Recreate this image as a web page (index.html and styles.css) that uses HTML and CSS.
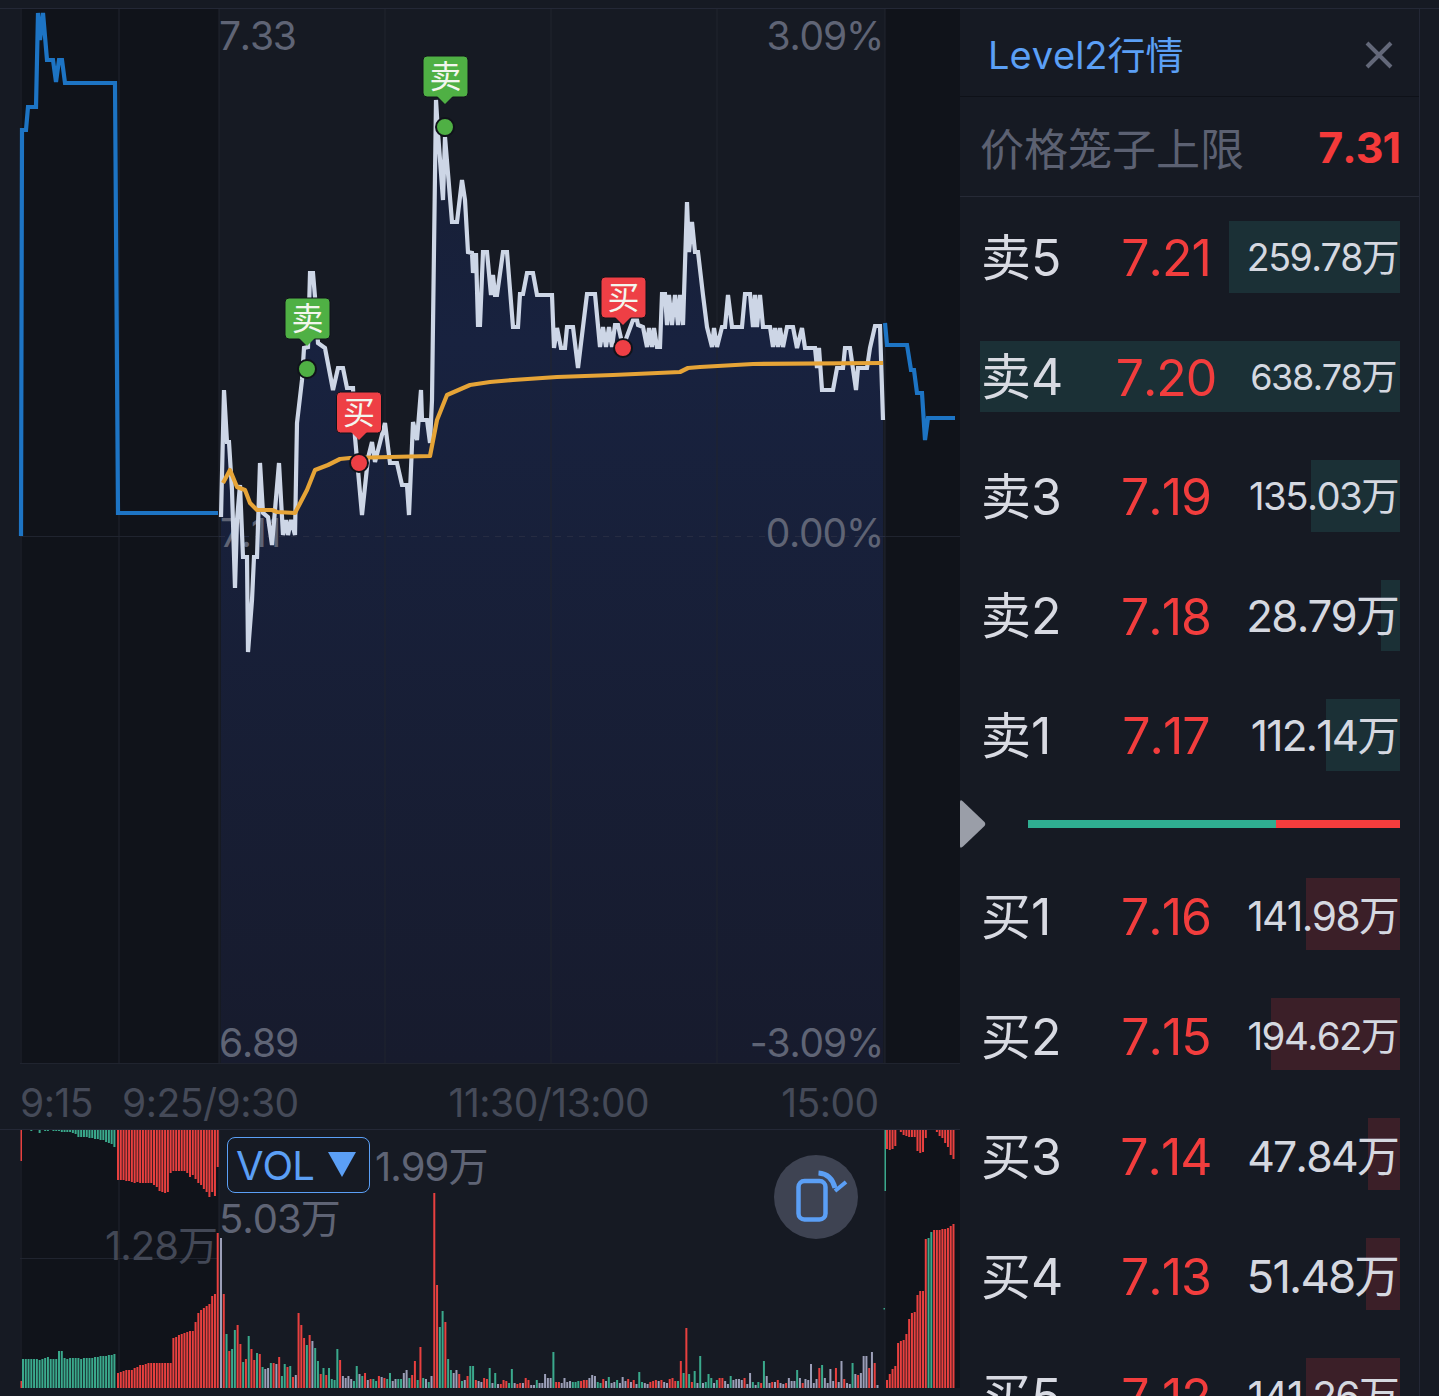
FILE: index.html
```html
<!DOCTYPE html>
<html lang="zh-CN">

<head>
  <meta charset="UTF-8">
  <meta name="viewport" content="width=device-width, initial-scale=1.0">
  <title>Level2行情</title>
  <link rel="stylesheet" href="styles.css">
</head>

<body>
  <div class="top-strip"></div>
  <div class="layout">
    <section class="chart-col">
      <svg class="price-chart" width="960" height="1055" viewBox="0 9 960 1055">
        <defs>
          <linearGradient id="area-fill" x1="0" y1="0" x2="0" y2="1">
            <stop offset="0" stop-color="#18224180"/>
            <stop offset="0.25" stop-color="#18223f"/>
            <stop offset="1" stop-color="#171b2d"/>
          </linearGradient>
        </defs>
        <!-- pre and post market shading -->
        <rect x="20" y="9" width="199" height="1055" fill="#10131a"/>
        <rect x="885" y="9" width="75" height="1055" fill="#10131a"/>

        <!-- area under the price line -->
        <polygon fill="url(#area-fill)" points="221,1063 221,517 224,390 227,442 229,442 232,490 235,588 237,520 240,485 243,557 247,557 248,652 252,600 254,557 257,557 260,463 263,513 268,517 272,545 279,463 283,535 286,520 288,535 291,520 295,535 297,423 302,380 304,348 308,347 310,273 313,273 315,297 318,343 325,348 333,390 338,368 343,368 347,388 353,388 355,437 362,515 368,458 372,442 375,462 385,423 390,463 397,463 402,485 407,485 409,515 413,422 417,440 421,390 422,420 427,420 430,443 432,400 436,100 438,133 443,200 445,137 452,222 457,222 462,180 465,200 468,252 472,253 473,273 476,253 478,325 480,325 483,252 487,252 491,295 493,275 495,295 497,295 503,252 507,252 513,327 518,327 520,294 523,294 527,273 533,273 537,295 552,295 554,348 557,328 561,348 565,348 567,327 573,327 578,368 587,294 595,294 600,347 603,327 606,347 609,327 612,347 615,325 618,325 623,347 633,320 637,320 638,325 643,327 647,347 649,328 652,347 654,328 657,347 660,347 662,294 665,294 667,325 669,295 672,325 675,295 678,325 680,295 683,325 684,295 687,202 689,252 692,222 695,252 698,252 703,295 707,327 712,347 714,328 717,347 722,327 725,327 728,295 732,327 742,327 745,294 750,294 753,327 755,295 757,327 760,295 763,327 770,327 773,347 775,328 778,347 780,328 783,347 787,327 793,327 797,348 802,328 805,348 815,348 817,368 819,348 822,390 833,390 837,368 843,368 845,348 850,348 856,390 858,368 867,368 870,348 875,326 880,326 883,420 883,1063"/>

        <!-- grid -->
        <g class="grid-line">
          <line x1="21" y1="9" x2="21" y2="1063"/>
          <line x1="119" y1="9" x2="119" y2="1063"/>
          <line x1="219" y1="9" x2="219" y2="1063"/>
          <line x1="385" y1="9" x2="385" y2="1063"/>
          <line x1="551" y1="9" x2="551" y2="1063"/>
          <line x1="717" y1="9" x2="717" y2="1063"/>
          <line x1="885" y1="9" x2="885" y2="1063"/>
          <line x1="20" y1="1063.5" x2="960" y2="1063.5"/>
          <line x1="20" y1="536.5" x2="219" y2="536.5"/>
          <line x1="885" y1="536.5" x2="960" y2="536.5"/>
          <line class="dash-line" x1="219" y1="536.5" x2="885" y2="536.5"/>
        </g>

        <text class="axis-text" x="219" y="50">7.33</text>
        <text class="axis-text" x="220" y="547">7.11</text>
        <text class="axis-text" x="219" y="1057">6.89</text>
        <text class="axis-text axis-end" x="883" y="50">3.09%</text>
        <text class="axis-text axis-end" x="883" y="547">0.00%</text>
        <text class="axis-text axis-end" x="883" y="1057">-3.09%</text>

        <!-- auction lines -->
        <polyline class="line-auction" points="21,536 22,130 26,130 28,107 36,107 38,13 40,40 43,13 47,60 53,60 56,82 59,60 62,60 65,83 115,83 118,513 218,513"/>
        <polyline class="line-auction" points="885,323 887,345 907,345 911,370 914,370 917,393 922,393 925,440 928,418 955,418"/>

        <!-- price line -->
        <polyline class="line-price" points="221,517 224,390 227,442 229,442 232,490 235,588 237,520 240,485 243,557 247,557 248,652 252,600 254,557 257,557 260,463 263,513 268,517 272,545 279,463 283,535 286,520 288,535 291,520 295,535 297,423 302,380 304,348 308,347 310,273 313,273 315,297 318,343 325,348 333,390 338,368 343,368 347,388 353,388 355,437 362,515 368,458 372,442 375,462 385,423 390,463 397,463 402,485 407,485 409,515 413,422 417,440 421,390 422,420 427,420 430,443 432,400 436,100 438,133 443,200 445,137 452,222 457,222 462,180 465,200 468,252 472,253 473,273 476,253 478,325 480,325 483,252 487,252 491,295 493,275 495,295 497,295 503,252 507,252 513,327 518,327 520,294 523,294 527,273 533,273 537,295 552,295 554,348 557,328 561,348 565,348 567,327 573,327 578,368 587,294 595,294 600,347 603,327 606,347 609,327 612,347 615,325 618,325 623,347 633,320 637,320 638,325 643,327 647,347 649,328 652,347 654,328 657,347 660,347 662,294 665,294 667,325 669,295 672,325 675,295 678,325 680,295 683,325 684,295 687,202 689,252 692,222 695,252 698,252 703,295 707,327 712,347 714,328 717,347 722,327 725,327 728,295 732,327 742,327 745,294 750,294 753,327 755,295 757,327 760,295 763,327 770,327 773,347 775,328 778,347 780,328 783,347 787,327 793,327 797,348 802,328 805,348 815,348 817,368 819,348 822,390 833,390 837,368 843,368 845,348 850,348 856,390 858,368 867,368 870,348 875,326 880,326 883,420"/>

        <!-- average line -->
        <polyline class="line-average" points="223,483 230,470 237,487 245,490 250,503 257,510 272,510 277,512 295,513 307,490 315,470 328,465 340,459 350,458 430,456 437,420 447,395 470,385 490,382 513,380 557,377 613,375 680,372 688,368 700,367 753,364 883,363"/>

        <!-- trade markers -->
        <g class="marker marker-sell">
          <rect x="285" y="298" width="45" height="41" rx="4"/>
          <path d="M299 338 L307 346 L315 338 Z"/>
          <text x="307.5" y="330">卖</text>
          <circle cx="307" cy="369" r="9"/>
        </g>
        <g class="marker marker-sell">
          <rect x="423" y="56" width="45" height="41" rx="4"/>
          <path d="M437 96 L445 104 L453 96 Z"/>
          <text x="445.5" y="88">卖</text>
          <circle cx="445" cy="127" r="9"/>
        </g>
        <g class="marker marker-buy">
          <rect x="336.5" y="392" width="45" height="41" rx="4"/>
          <path d="M351 432 L359 440 L367 432 Z"/>
          <text x="359" y="424">买</text>
          <circle cx="359" cy="463" r="9"/>
        </g>
        <g class="marker marker-buy">
          <rect x="601" y="277" width="45" height="41" rx="4"/>
          <path d="M615 317 L623 325 L631 317 Z"/>
          <text x="623.5" y="309">买</text>
          <circle cx="623" cy="348" r="9"/>
        </g>
      </svg>

      <div class="time-axis">
        <span class="time-a">9:15</span>
        <span class="time-b">9:25/9:30</span>
        <span class="time-c">11:30/13:00</span>
        <span class="time-d">15:00</span>
      </div>

      <div class="vol-panel">
        <svg id="vol-chart" class="vol-chart" width="960" height="267" viewBox="0 1129 960 267"></svg>
        <div class="vol-tag">
          <span>VOL</span>
          <svg width="28" height="26" viewBox="0 0 28 26"><path d="M0 0 H28 L14 25 Z" fill="#5b9ff5"/></svg>
        </div>
        <span class="vol-text vol-text-cur">1.99万</span>
        <span class="vol-text vol-text-max">5.03万</span>
        <span class="vol-text vol-text-pre">1.28万</span>
        <button class="rotate-btn" type="button" aria-label="rotate">
          <svg width="84" height="84" viewBox="0 0 84 84" fill="none" stroke="#5b9ff5">
            <rect x="24.5" y="26" width="27" height="38.5" rx="6" stroke-width="4.5"/>
            <path d="M44.5 18 C52 18.5 58.5 23 61 33" stroke-width="5"/>
            <path d="M61 36 L72 27" stroke-width="4"/>
          </svg>
        </button>
      </div>
    </section>

    <aside class="panel">
      <div class="panel-head">
        <span class="panel-title">Level2行情</span>
        <svg class="panel-close" width="28" height="28" viewBox="0 0 28 28" stroke="#636879" stroke-width="4"><path d="M2 2 L26 26 M26 2 L2 26"/></svg>
      </div>
      <div class="cage-row">
        <span class="cage-label">价格笼子上限</span>
        <span class="cage-value">7.31</span>
      </div>

      <div class="quote-row sell-row">
        <span class="depth depth-sell" style="width: 171px"></span>
        <span class="q-label">卖5</span><span class="q-price">7.21</span><span class="q-vol" data-fit="151">259.78万</span>
      </div>
      <div class="quote-row sell-row">
        <span class="depth depth-sell" style="width: 420px"></span>
        <span class="q-label">卖4</span><span class="q-price">7.20</span><span class="q-vol q-vol-full" data-fit="146">638.78万</span>
      </div>
      <div class="quote-row sell-row">
        <span class="depth depth-sell" style="width: 89px"></span>
        <span class="q-label">卖3</span><span class="q-price">7.19</span><span class="q-vol" data-fit="149">135.03万</span>
      </div>
      <div class="quote-row sell-row">
        <span class="depth depth-sell" style="width: 19px"></span>
        <span class="q-label">卖2</span><span class="q-price">7.18</span><span class="q-vol" data-fit="152">28.79万</span>
      </div>
      <div class="quote-row sell-row">
        <span class="depth depth-sell" style="width: 74px"></span>
        <span class="q-label">卖1</span><span class="q-price">7.17</span><span class="q-vol" data-fit="147">112.14万</span>
      </div>

      <div class="split-row">
        <svg class="split-arrow" width="26" height="48" viewBox="0 0 26 48"><path d="M0 2 Q0 -1 3 1.5 L24.5 22 Q26 24 24.5 26 L3 46.5 Q0 49 0 46 Z" fill="#9a9ea8"/></svg>
        <div class="split-bar">
          <span class="split-green"></span>
          <span class="split-red"></span>
        </div>
      </div>

      <div class="quote-row">
        <span class="depth depth-buy" style="width: 94px"></span>
        <span class="q-label">买1</span><span class="q-price">7.16</span><span class="q-vol" data-fit="151">141.98万</span>
      </div>
      <div class="quote-row">
        <span class="depth depth-buy" style="width: 129px"></span>
        <span class="q-label">买2</span><span class="q-price">7.15</span><span class="q-vol" data-fit="151">194.62万</span>
      </div>
      <div class="quote-row">
        <span class="depth depth-buy" style="width: 32px"></span>
        <span class="q-label">买3</span><span class="q-price">7.14</span><span class="q-vol" data-fit="151">47.84万</span>
      </div>
      <div class="quote-row">
        <span class="depth depth-buy" style="width: 34px"></span>
        <span class="q-label">买4</span><span class="q-price">7.13</span><span class="q-vol" data-fit="151">51.48万</span>
      </div>
      <div class="quote-row">
        <span class="depth depth-buy" style="width: 94px"></span>
        <span class="q-label">买5</span><span class="q-price">7.12</span><span class="q-vol" data-fit="151">141.26万</span>
      </div>
    </aside>
  </div>
  <script src="chart.js"></script>
</body>

</html>
```

FILE: styles.css
```css
html,
body {
  margin: 0;
  padding: 0;
  height: 1396px;
  overflow: hidden;
  background-color: #161a23;
  font-family: Inter, "Noto Sans CJK SC", sans-serif;
  font-kerning: none;
}

.top-strip {
  height: 8px;
  border-bottom: 1px solid #242836;
}

.layout {
  display: flex;
  align-items: flex-start;
}

/* Left column: price chart, time axis, volume */
.chart-col {
  width: 960px;
  flex-shrink: 0;
}

.price-chart {
  display: block;
  overflow: visible;
}

.grid-line line {
  stroke: #20242f;
  stroke-width: 1;
}

.grid-line .dash-line {
  stroke: #262c42;
  stroke-dasharray: 6 6;
}

.axis-text {
  font-size: 39px;
  letter-spacing: -1.2px;
  fill: #5f6475;
}

.axis-end {
  text-anchor: end;
}

.line-price,
.line-average,
.line-auction {
  fill: none;
  stroke-width: 4.2;
  stroke-linejoin: miter;
}

.line-price {
  stroke: #cdd6e6;
}

.line-average {
  stroke: #e6a437;
  stroke-linejoin: round;
}

.line-auction {
  stroke: #1d74c4;
}

.marker text {
  font-size: 32px;
  text-anchor: middle;
  fill: #f3f6ee;
}

.marker circle {
  stroke: #10131a;
  stroke-width: 2;
}

.marker-sell rect,
.marker-sell path,
.marker-sell circle {
  fill: #4fb044;
}

.marker-buy rect,
.marker-buy path,
.marker-buy circle {
  fill: #ee3f45;
}

.marker rect {
  stroke: #10131a;
  stroke-width: 1;
}

.time-axis {
  display: flex;
  align-items: center;
  height: 65px;
  padding-top: 12px;
  box-sizing: border-box;
  font-size: 39px;
  letter-spacing: -0.5px;
  color: #454a58;
  white-space: nowrap;
}

.time-a { margin-left: 20px; }
.time-b { margin-left: 29px; }
.time-c { margin-left: 150px; }
.time-d { margin-left: 132px; }

.vol-panel {
  position: relative;
  height: 267px;
  border-top: 1px solid #242836;
  box-sizing: border-box;
  overflow: hidden;
}

.vol-chart {
  display: block;
  margin-top: -1px;
}

.vol-tag {
  position: absolute;
  left: 227px;
  top: 7px;
  width: 143px;
  height: 56px;
  box-sizing: border-box;
  padding: 0 13px 0 8px;
  border: 1px solid #5b9ff5;
  border-radius: 8px;
  display: flex;
  align-items: center;
  justify-content: space-between;
  font-size: 40px;
  letter-spacing: -1px;
  color: #5b9ff5;
}

.vol-text {
  position: absolute;
  font-size: 40px;
  letter-spacing: -1px;
  color: #5f6475;
  white-space: nowrap;
}

.vol-text-cur { left: 375px; top: 5px; }
.vol-text-max { left: 219px; top: 57px; }
.vol-text-pre { right: 743px; top: 84px; color: #434856; }

.rotate-btn {
  position: absolute;
  left: 774px;
  top: 25px;
  width: 84px;
  height: 84px;
  padding: 0;
  border: 0;
  border-radius: 50%;
  background-color: #3e4352;
}

.rotate-btn svg {
  display: block;
}

/* Right column: order book */
.panel {
  width: 459px;
  flex-shrink: 0;
  border-right: 1px solid #232735;
}

.panel-head {
  display: flex;
  align-items: center;
  justify-content: space-between;
  height: 87px;
  padding: 0 26px 0 28px;
  border-bottom: 1px solid #0e1118;
}

.panel-title {
  font-size: 38px;
  color: #5b9ff5;
}

.panel-close {
  margin-top: 4px;
}

.cage-row {
  display: flex;
  align-items: center;
  justify-content: space-between;
  height: 99px;
  padding: 0 19px 0 20px;
  border-bottom: 1px solid #262a36;
}

.cage-label {
  font-size: 44px;
  color: #5c6172;
}

.cage-value {
  font-size: 43px;
  font-weight: 700;
  letter-spacing: -1px;
  color: #f43a3a;
}

.quote-row {
  position: relative;
  display: grid;
  grid-template-columns: 130px 110px 1fr;
  align-items: center;
  height: 120px;
  padding: 0 21px 0 21px;
  box-sizing: border-box;
  white-space: nowrap;
}

.sell-row {
  height: 119.5px;
}

.depth {
  position: absolute;
  top: 24px;
  bottom: 24px;
  right: 19px;
}

.depth-sell {
  background-color: #1b3036;
}

.depth-buy {
  background-color: #3b1f28;
}

.q-label,
.q-price,
.q-vol {
  position: relative;
}

.q-label {
  font-size: 50px;
  color: #d8dae2;
  padding-bottom: 2px;
}

.q-price {
  font-size: 50px;
  letter-spacing: -1px;
  text-align: center;
  color: #f23d3d;
  padding-top: 6px;
}

.q-vol {
  justify-self: end;
  font-size: 38px;
  letter-spacing: -0.04em;
  color: #d5d8e0;
  padding-bottom: 2px;
}

.sell-row .q-label {
  padding-bottom: 6px;
}

.sell-row .q-price {
  padding-top: 3px;
}

.sell-row .q-vol {
  padding-bottom: 4px;
}

.q-vol-full {
  margin-right: 2px;
}

.split-row {
  display: flex;
  align-items: center;
  height: 59.5px;
  padding-right: 19px;
}

.split-arrow {
  display: block;
  flex-shrink: 0;
}

.split-bar {
  display: flex;
  flex: 1;
  height: 8px;
  margin-left: 42px;
}

.split-green {
  width: 248px;
  background-color: #2fae91;
}

.split-red {
  flex: 1;
  background-color: #f53d3d;
}
```

FILE: chart.js
```js
// Volume chart, bars grouped by session
const svg = document.getElementById('vol-chart');
const BASE = 1388;
const TOP = 1129;
const PITCH = 2.77;

const COLORS = { r: '#e8403f', g: '#3aa98c', w: '#9c9fb8' };

// Pre auction, 9:15 - 9:25
const preGreenTop = [1, 1, 1, 2, 1, 1, 4, 1, 2, 2, 1, 2, 2, 2, 3, 3, 3, 3, 4, 5, 8, 8, 8, 8, 9, 9, 10, 10, 11, 11, 13, 14, 15, 18];
const preGreenBottom = [29, 29, 29, 29, 29, 29, 28, 29, 30, 31, 29, 29, 29, 37, 37, 30, 29, 30, 30, 30, 30, 29, 30, 30, 30, 30, 31, 31, 32, 32, 32, 33, 33, 34];
const preRedTop = [51, 51, 51, 52, 52, 53, 54, 53, 54, 54, 54, 54, 54, 56, 58, 62, 63, 64, 63, 44, 42, 42, 42, 42, 42, 44, 48, 46, 50, 54, 56, 60, 63, 68, 63, 67, 38];
const preRedBottom = [15, 16, 17, 18, 18, 18, 20, 21, 23, 23, 24, 25, 25, 25, 25, 25, 25, 25, 25, 25, 50, 51, 53, 54, 55, 56, 57, 57, 66, 75, 78, 80, 82, 84, 92, 94, 155];

// Main session bars, "color + height"
const mainBars = ('w150 r94 g54 r37 g39 g58 r63 r44 g26 r29 g52 r39 r28 g35 r34 g21 w19 w20 g25 r25 w24 r31 g12 g24 r21 g22 r11 w13 ' +
  'r75 r63 r50 g43 r53 w47 g40 g27 r14 g20 r13 g20 g9 g8 g39 r28 w12 w10 w12 w9 g7 g22 w14 g12 r15 w8 r9 g9 g7 r12 w11 r10 g9 g15 w7 w9 g9 g9 ' +
  'w15 w18 g10 r13 r27 g8 r41 g10 w9 g6 w12 r195 r103 g61 g77 r66 g29 g18 w15 w18 r14 g7 w8 r12 g22 g22 r8 w7 ' +
  'w6 r10 r9 g20 w5 g15 w4 r4 r8 r7 g5 g19 w5 r4 r5 w5 r10 r8 w3 w3 g8 w5 w5 w14 w10 w10 g36 r6 r6 w5 w10 w6 w7 g6 g6 g7 r7 r8 r8 w10 w13 w12 g6 g5 r9 w7 g11 w5 w6 g8 w5 w11 w7 r9 w6 r8 w4 g16 g6 w5 w4 ' +
  'r6 r7 r8 w7 r8 w6 w5 r9 r10 r7 g7 r27 g15 r60 g14 r6 g17 w5 g32 w5 g6 g14 g10 w5 g8 r10 r10 w7 w4 g12 w8 w9 w9 w8 r10 w4 w15 g6 w3 g6 r5 g27 w12 w5 r6 w6 r8 w5 w4 r5 w10 w7 w7 g18 w10 r5 w9 w8 w24 w5 w9 r20 g23 w10 w5 w19 w7 r20 w6 w27 r9 w5 w4 g25 w14 r13 w15 w32 w32 r20 w36 r25 w3').split(' ');

// Post market, 15:00 onwards
const postTop = [20, 21, 20, 17, 1, 3, 6, 7, 8, 8, 8, 22, 24, 23, 9, 1, 1, 0, 3, 7, 9, 14, 18, 26, 30];
const postBottom = [8, 14, 19, 22, 45, 47, 48, 54, 69, 75, 76, 93, 97, 97, 149, 150, 156, 158, 158, 158, 159, 159, 160, 162, 164];
const postGreen = [15, 16];

function addEl(name, attrs) {
  const el = document.createElementNS('http://www.w3.org/2000/svg', name);
  Object.keys(attrs).forEach(k => el.setAttribute(k, attrs[k]));
  svg.appendChild(el);
}

function addBar(x, y, h, color, width) {
  addEl('rect', { x: x, y: y, width: width || 2, height: h, fill: color });
}

// Dark bands and grid
addEl('rect', { x: 20, y: TOP, width: 199, height: BASE - TOP, fill: '#10131a' });
addEl('rect', { x: 885, y: TOP, width: 75, height: BASE - TOP, fill: '#10131a' });
[21, 119, 219, 885].forEach(x => {
  addEl('line', { x1: x, y1: TOP, x2: x, y2: BASE, stroke: '#20242f' });
});
addEl('line', { x1: 20, y1: 1258.5, x2: 219, y2: 1258.5, stroke: '#20242f' });

// Left edge ticks
addBar(20.5, TOP, 32, COLORS.r, 1.5);
addBar(20.5, BASE - 7, 7, COLORS.r, 1.5);

preGreenTop.forEach((h, i) => addBar(22 + i * PITCH, TOP, h, COLORS.g));
preGreenBottom.forEach((h, i) => addBar(22 + i * PITCH, BASE - h, h, COLORS.g));
preRedTop.forEach((h, i) => addBar(117 + i * PITCH, TOP, h, COLORS.r));
preRedBottom.forEach((h, i) => addBar(117 + i * PITCH, BASE - h, h, COLORS.r));

mainBars.forEach((bar, i) => {
  const h = Number(bar.slice(1));
  addBar(220 + i * PITCH, BASE - h, h, COLORS[bar[0]]);
});

addBar(883.5, BASE - 80, 1.5, COLORS.g, 1.5);
addBar(884.5, TOP, 62, COLORS.g, 1.5);

postTop.forEach((h, i) => {
  const color = postGreen.includes(i) ? COLORS.g : COLORS.r;
  addBar(886 + i * PITCH, TOP, h, color);
});
postBottom.forEach((h, i) => {
  const color = postGreen.includes(i) ? COLORS.g : COLORS.r;
  addBar(886 + i * PITCH, BASE - h, h, color);
});

document.querySelectorAll('.q-vol').forEach(el => {
  const size = parseFloat(getComputedStyle(el).fontSize);
  el.style.fontSize = (size * Number(el.dataset.fit) / el.offsetWidth).toFixed(1) + 'px';
});
```
